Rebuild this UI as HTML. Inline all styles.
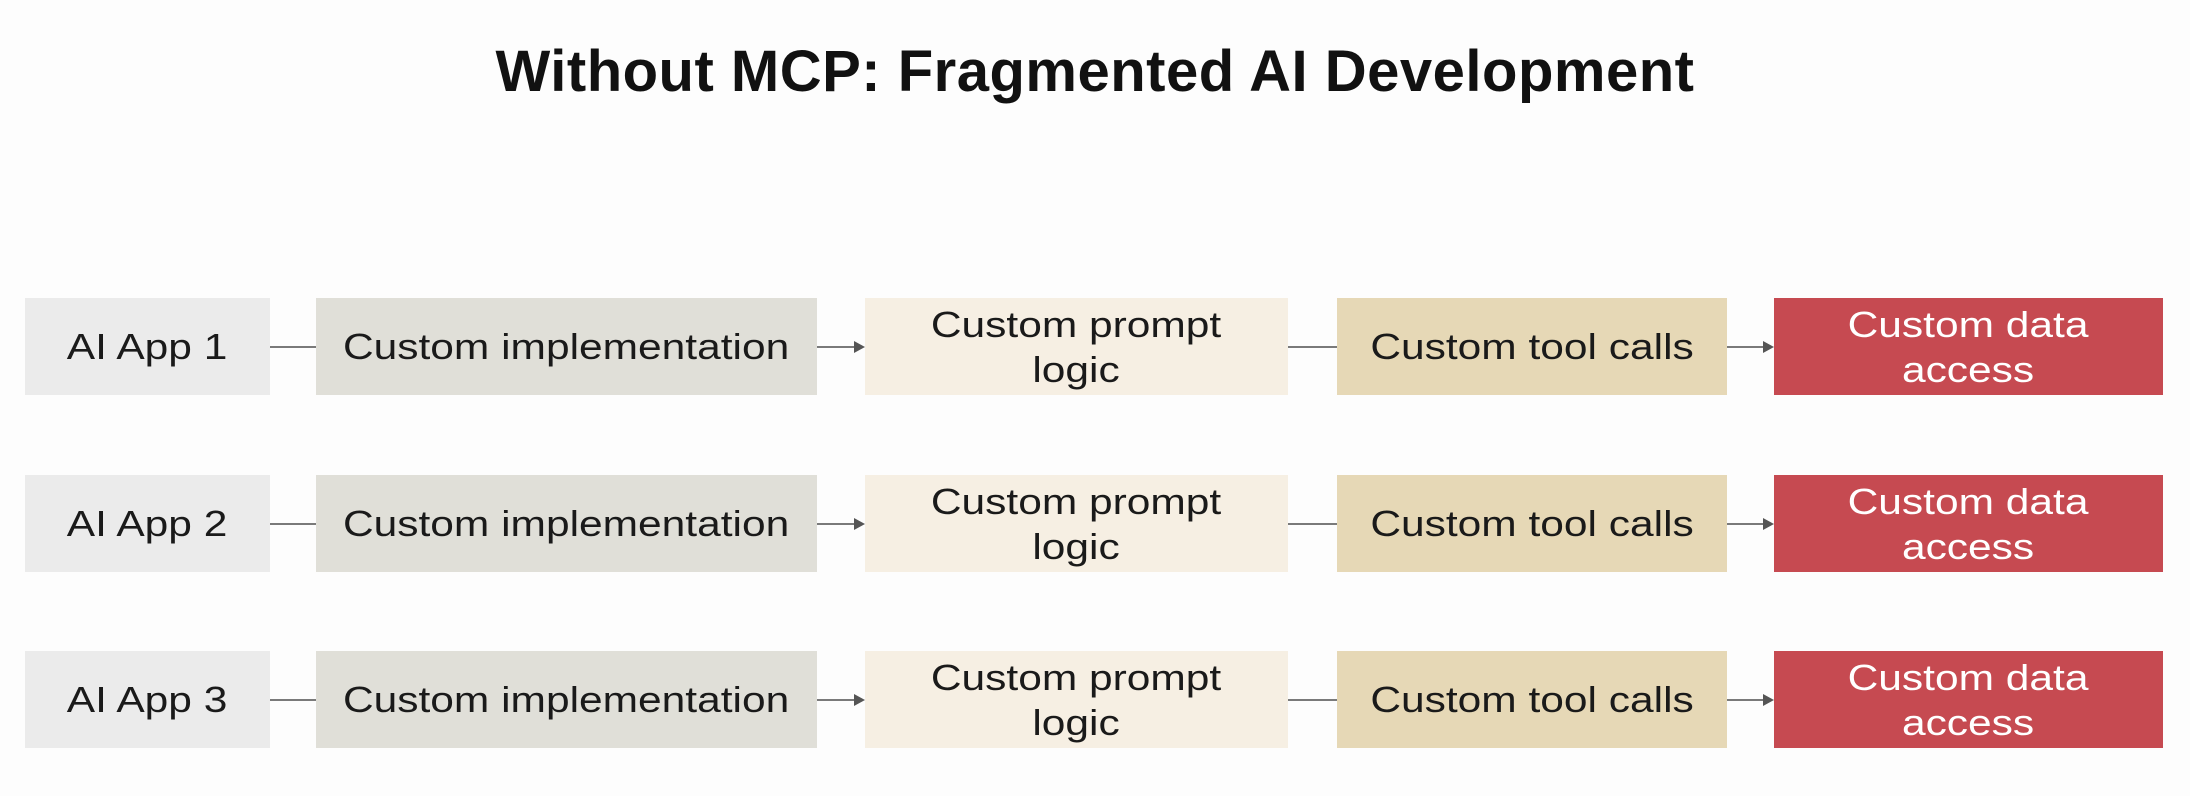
<!DOCTYPE html>
<html><head><meta charset="utf-8"><style>
html,body{margin:0;padding:0;background:#fdfdfd;}
body{width:2190px;height:796px;position:relative;overflow:hidden;font-family:"Liberation Sans",sans-serif;}
h1{position:absolute;top:38px;left:0;width:2190px;text-align:center;margin:0;font-size:58px;font-weight:bold;color:#111;letter-spacing:0.5px;}
.b{position:absolute;display:flex;align-items:center;justify-content:center;text-align:center;font-size:36px;line-height:45px;color:#1a1a1a;}
.b span{display:inline-block;transform:scaleX(1.18);}
.c1{left:25px;width:245px;background:#ebebeb;}
.c2{left:316px;width:501px;background:#e0dfd8;}
.c3{left:865px;width:423px;background:#f6efe3;}
.c4{left:1337px;width:390px;background:#e6d8b6;}
.c5{left:1774px;width:389px;background:#c64a51;color:#fff;}
.l{position:absolute;height:2px;background:#7a7a7a;}
.a{position:absolute;width:0;height:0;border-top:6px solid transparent;border-bottom:6px solid transparent;border-left:11px solid #555;}
</style></head><body>
<h1>Without MCP: Fragmented AI Development</h1>
<div id="rows"></div>
<script>
var tops=[298,475,651],h='';
tops.forEach(function(t,i){
 var s='top:'+t+'px;height:97px;';
 h+='<div class="b c1" style="'+s+'"><span>AI App '+(i+1)+'</span></div>';
 h+='<div class="b c2" style="'+s+'"><span>Custom implementation</span></div>';
 h+='<div class="b c3" style="'+s+'"><span>Custom prompt<br>logic</span></div>';
 h+='<div class="b c4" style="'+s+'"><span>Custom tool calls</span></div>';
 h+='<div class="b c5" style="'+s+'"><span>Custom data<br>access</span></div>';
 var m=t+48;
 h+='<div class="l" style="left:270px;width:46px;top:'+m+'px"></div>';
 h+='<div class="l" style="left:817px;width:38px;top:'+m+'px"></div><div class="a" style="left:854px;top:'+(m-5)+'px"></div>';
 h+='<div class="l" style="left:1288px;width:49px;top:'+m+'px"></div>';
 h+='<div class="l" style="left:1727px;width:37px;top:'+m+'px"></div><div class="a" style="left:1763px;top:'+(m-5)+'px"></div>';
});
document.getElementById('rows').innerHTML=h;
</script>
</body></html>
